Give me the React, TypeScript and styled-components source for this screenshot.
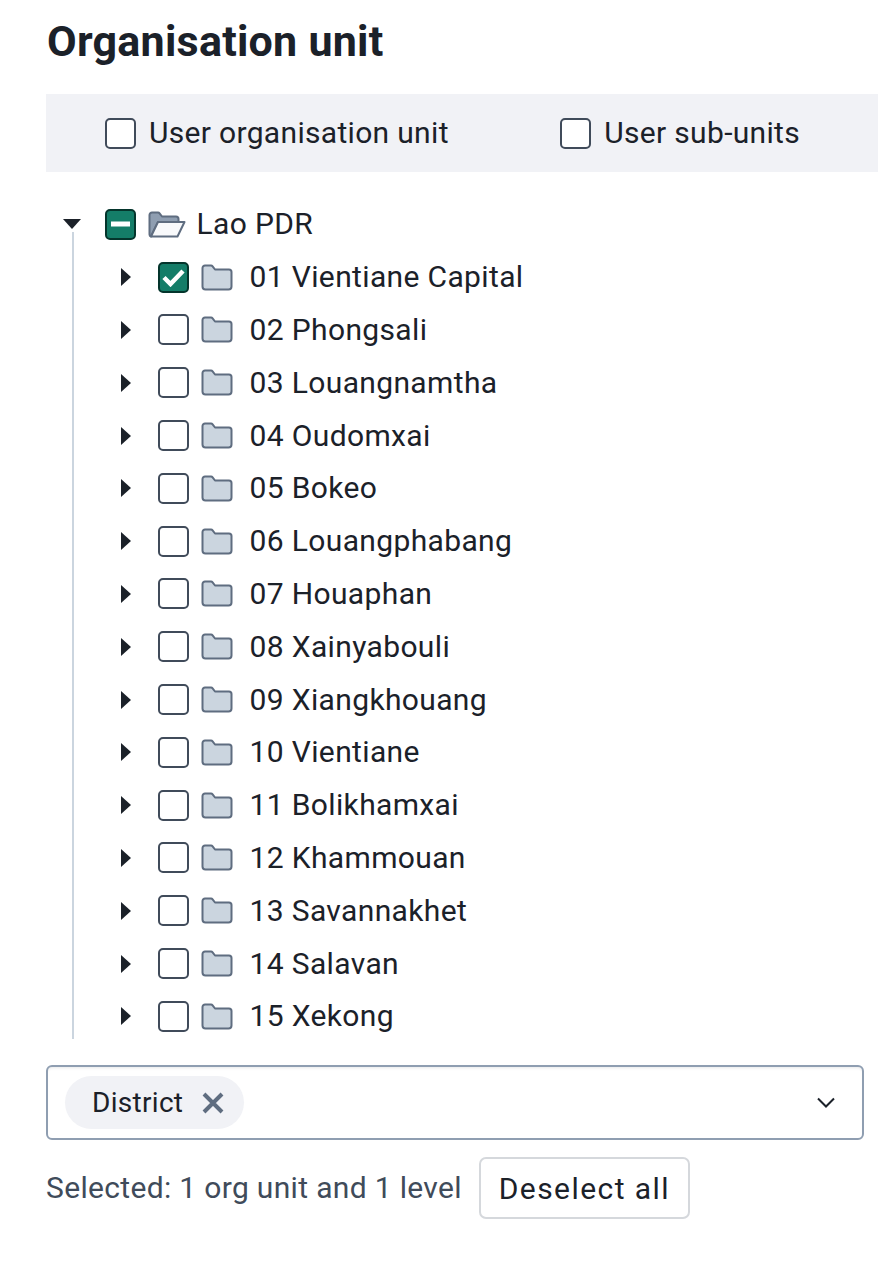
import React from 'react'
import styled, { createGlobalStyle } from 'styled-components'

const GlobalStyle = createGlobalStyle`
    html, body {
        margin: 0;
        padding: 0;
        background: #fff;
        overflow: hidden;
    }
    body {
        font-family: Roboto, "Liberation Sans", sans-serif;
        color: #1b2129;
    }
`

const Page = styled.div`
    width: 878px;
    height: 1274px;
    box-sizing: border-box;
    padding: 13px 0 0 46px;
`

const Title = styled.h2`
    margin: 0 0 25px 1px;
    font-size: 43px;
    line-height: 56px;
    font-weight: 700;
    letter-spacing: 0.25px;
    color: #1b2129;
`

const Toolbar = styled.div`
    display: flex;
    align-items: center;
    height: 78px;
    padding-left: 59px;
    gap: 111.5px;
    background: #f1f2f6;
`

const CheckLabel = styled.label`
    display: flex;
    align-items: center;
    gap: 13px;
    font-size: 30px;
    line-height: 38px;
    letter-spacing: 0.32px;
`

const Box = styled.span<{ $filled?: boolean }>`
    display: flex;
    align-items: center;
    justify-content: center;
    width: 31px;
    height: 31px;
    box-sizing: border-box;
    flex: none;
    border-radius: 5px;
    border: 2px solid ${p => (p.$filled ? '#04352c' : '#404b5a')};
    background: ${p => (p.$filled ? '#147d68' : '#fff')};
`

const Tree = styled.div`
    position: relative;
    margin-top: 26px;
    height: 841px;
`

const TreeLine = styled.div`
    position: absolute;
    left: 26px;
    top: 34px;
    bottom: 0;
    width: 2px;
    background: #cbd5df;
`

const Row = styled.div<{ $child?: boolean }>`
    display: flex;
    align-items: center;
    height: 52.8px;
    padding-left: ${p => (p.$child ? '74px' : '17px')};
`

const Caret = styled.svg`
    flex: none;
    display: block;
`

const CaretSlot = styled.span<{ $child?: boolean }>`
    display: flex;
    justify-content: flex-start;
    width: ${p => (p.$child ? '38px' : '42px')};
    flex: none;
`

const FolderSlot = styled.span`
    display: flex;
    align-items: center;
    flex: none;
    margin-left: 12px;
    width: 48.5px;
`

const RowText = styled.span`
    font-size: 30px;
    line-height: 38px;
    letter-spacing: 0.36px;
    white-space: nowrap;
`

const SelectBox = styled.div`
    display: flex;
    align-items: center;
    justify-content: space-between;
    box-sizing: border-box;
    width: 818px;
    height: 75px;
    margin-top: 26px;
    padding: 0 27px 0 17px;
    border: 2px solid #8f9eb1;
    border-radius: 6px;
    background: #fff;
    box-shadow: inset 0 3px 3px -2px rgba(33, 41, 52, 0.1);
`

const Chip = styled.div`
    display: flex;
    align-items: center;
    box-sizing: border-box;
    height: 53px;
    width: 179px;
    padding-left: 27px;
    gap: 19px;
    border-radius: 27px;
    background: #f1f2f6;
    font-size: 28px;
    line-height: 36px;
    letter-spacing: 0.3px;
`

const Footer = styled.div`
    display: flex;
    align-items: center;
    gap: 17px;
    margin-top: 17px;
`

const SelectedText = styled.span`
    font-size: 30px;
    line-height: 38px;
    letter-spacing: 0.33px;
    color: #404b5a;
    white-space: nowrap;
`

const Button = styled.button`
    box-sizing: border-box;
    width: 211px;
    height: 62px;
    padding: 0;
    border: 2px solid #d5d8dc;
    border-radius: 7px;
    background: #fff;
    font-family: inherit;
    font-size: 30px;
    letter-spacing: 1.45px;
    color: #1b2129;
`

const districts = [
    '02 Phongsali',
    '03 Louangnamtha',
    '04 Oudomxai',
    '05 Bokeo',
    '06 Louangphabang',
    '07 Houaphan',
    '08 Xainyabouli',
    '09 Xiangkhouang',
    '10 Vientiane',
    '11 Bolikhamxai',
    '12 Khammouan',
    '13 Savannakhet',
    '14 Salavan',
    '15 Xekong',
]

const CaretRight = () => (
    <Caret width="12" height="18" viewBox="0 0 12 18">
        <path d="M1 0 L11 9 L1 18 Z" fill="#1b2129" />
    </Caret>
)

const CaretDown = () => (
    <Caret width="18" height="12" viewBox="0 0 18 12">
        <path d="M0 1 H18 L9 11 Z" fill="#1b2129" />
    </Caret>
)

const Folder = () => (
    <svg width="32" height="27" viewBox="0 0 32 27">
        <path
            d="M1.5 4 a2.5 2.5 0 0 1 2.5 -2.5 h6 a2 2 0 0 1 1.6 .8 L14 5.5 h14 a2.5 2.5 0 0 1 2.5 2.5 v14.5 a3 3 0 0 1 -3 3 h-23 a3 3 0 0 1 -3 -3 Z"
            fill="#cbd5df"
            stroke="#5f6d80"
            strokeWidth="2"
            strokeLinejoin="round"
        />
    </svg>
)

const FolderOpen = () => (
    <svg width="38" height="27" viewBox="0 0 38 27">
        <path
            d="M1.5 4 a2.5 2.5 0 0 1 2.5 -2.5 h6 a2 2 0 0 1 1.6 .8 L14 5.5 h14 a2.5 2.5 0 0 1 2.5 2.5 v3 H10 L3 25.5 a2 2 0 0 1 -1.5 -2 Z"
            fill="#8f9eb1"
            stroke="#5f6d80"
            strokeWidth="2"
            strokeLinejoin="round"
        />
        <path
            d="M10 11 H36.5 L29.5 25.5 H3 Z"
            fill="#f8f9fb"
            stroke="#5f6d80"
            strokeWidth="2"
            strokeLinejoin="round"
        />
    </svg>
)

const Check = () => (
    <svg width="23" height="19" viewBox="0 0 23 19">
        <path d="M2 9.5 L8.5 16 L21 3" fill="none" stroke="#fff" strokeWidth="4.5" />
    </svg>
)

const Dash = () => (
    <svg width="19" height="6" viewBox="0 0 19 6">
        <rect width="19" height="5" y="0.5" fill="#fff" />
    </svg>
)

const CloseX = () => (
    <svg width="22" height="22" viewBox="0 0 22 22">
        <path d="M2 2 L20 20 M20 2 L2 20" stroke="#5f6d80" strokeWidth="4" />
    </svg>
)

const Chevron = () => (
    <svg width="18" height="11" viewBox="0 0 18 11">
        <path d="M1 1.5 L9 9.5 L17 1.5" fill="none" stroke="#1b2129" strokeWidth="2" />
    </svg>
)

const App = () => (
    <Page>
        <GlobalStyle />
        <Title>Organisation unit</Title>
        <Toolbar>
            <CheckLabel>
                <Box />
                User organisation unit
            </CheckLabel>
            <CheckLabel>
                <Box />
                User sub-units
            </CheckLabel>
        </Toolbar>
        <Tree>
            <TreeLine />
            <Row>
                <CaretSlot>
                    <CaretDown />
                </CaretSlot>
                <Box $filled>
                    <Dash />
                </Box>
                <FolderSlot>
                    <FolderOpen />
                </FolderSlot>
                <RowText>Lao PDR</RowText>
            </Row>
            <Row $child>
                <CaretSlot $child>
                    <CaretRight />
                </CaretSlot>
                <Box $filled>
                    <Check />
                </Box>
                <FolderSlot>
                    <Folder />
                </FolderSlot>
                <RowText>01 Vientiane Capital</RowText>
            </Row>
            {districts.map(name => (
                <Row $child key={name}>
                    <CaretSlot $child>
                        <CaretRight />
                    </CaretSlot>
                    <Box />
                    <FolderSlot>
                        <Folder />
                    </FolderSlot>
                    <RowText>{name}</RowText>
                </Row>
            ))}
        </Tree>
        <SelectBox>
            <Chip>
                District
                <CloseX />
            </Chip>
            <Chevron />
        </SelectBox>
        <Footer>
            <SelectedText>Selected: 1 org unit and 1 level</SelectedText>
            <Button>Deselect all</Button>
        </Footer>
    </Page>
)

export default App
